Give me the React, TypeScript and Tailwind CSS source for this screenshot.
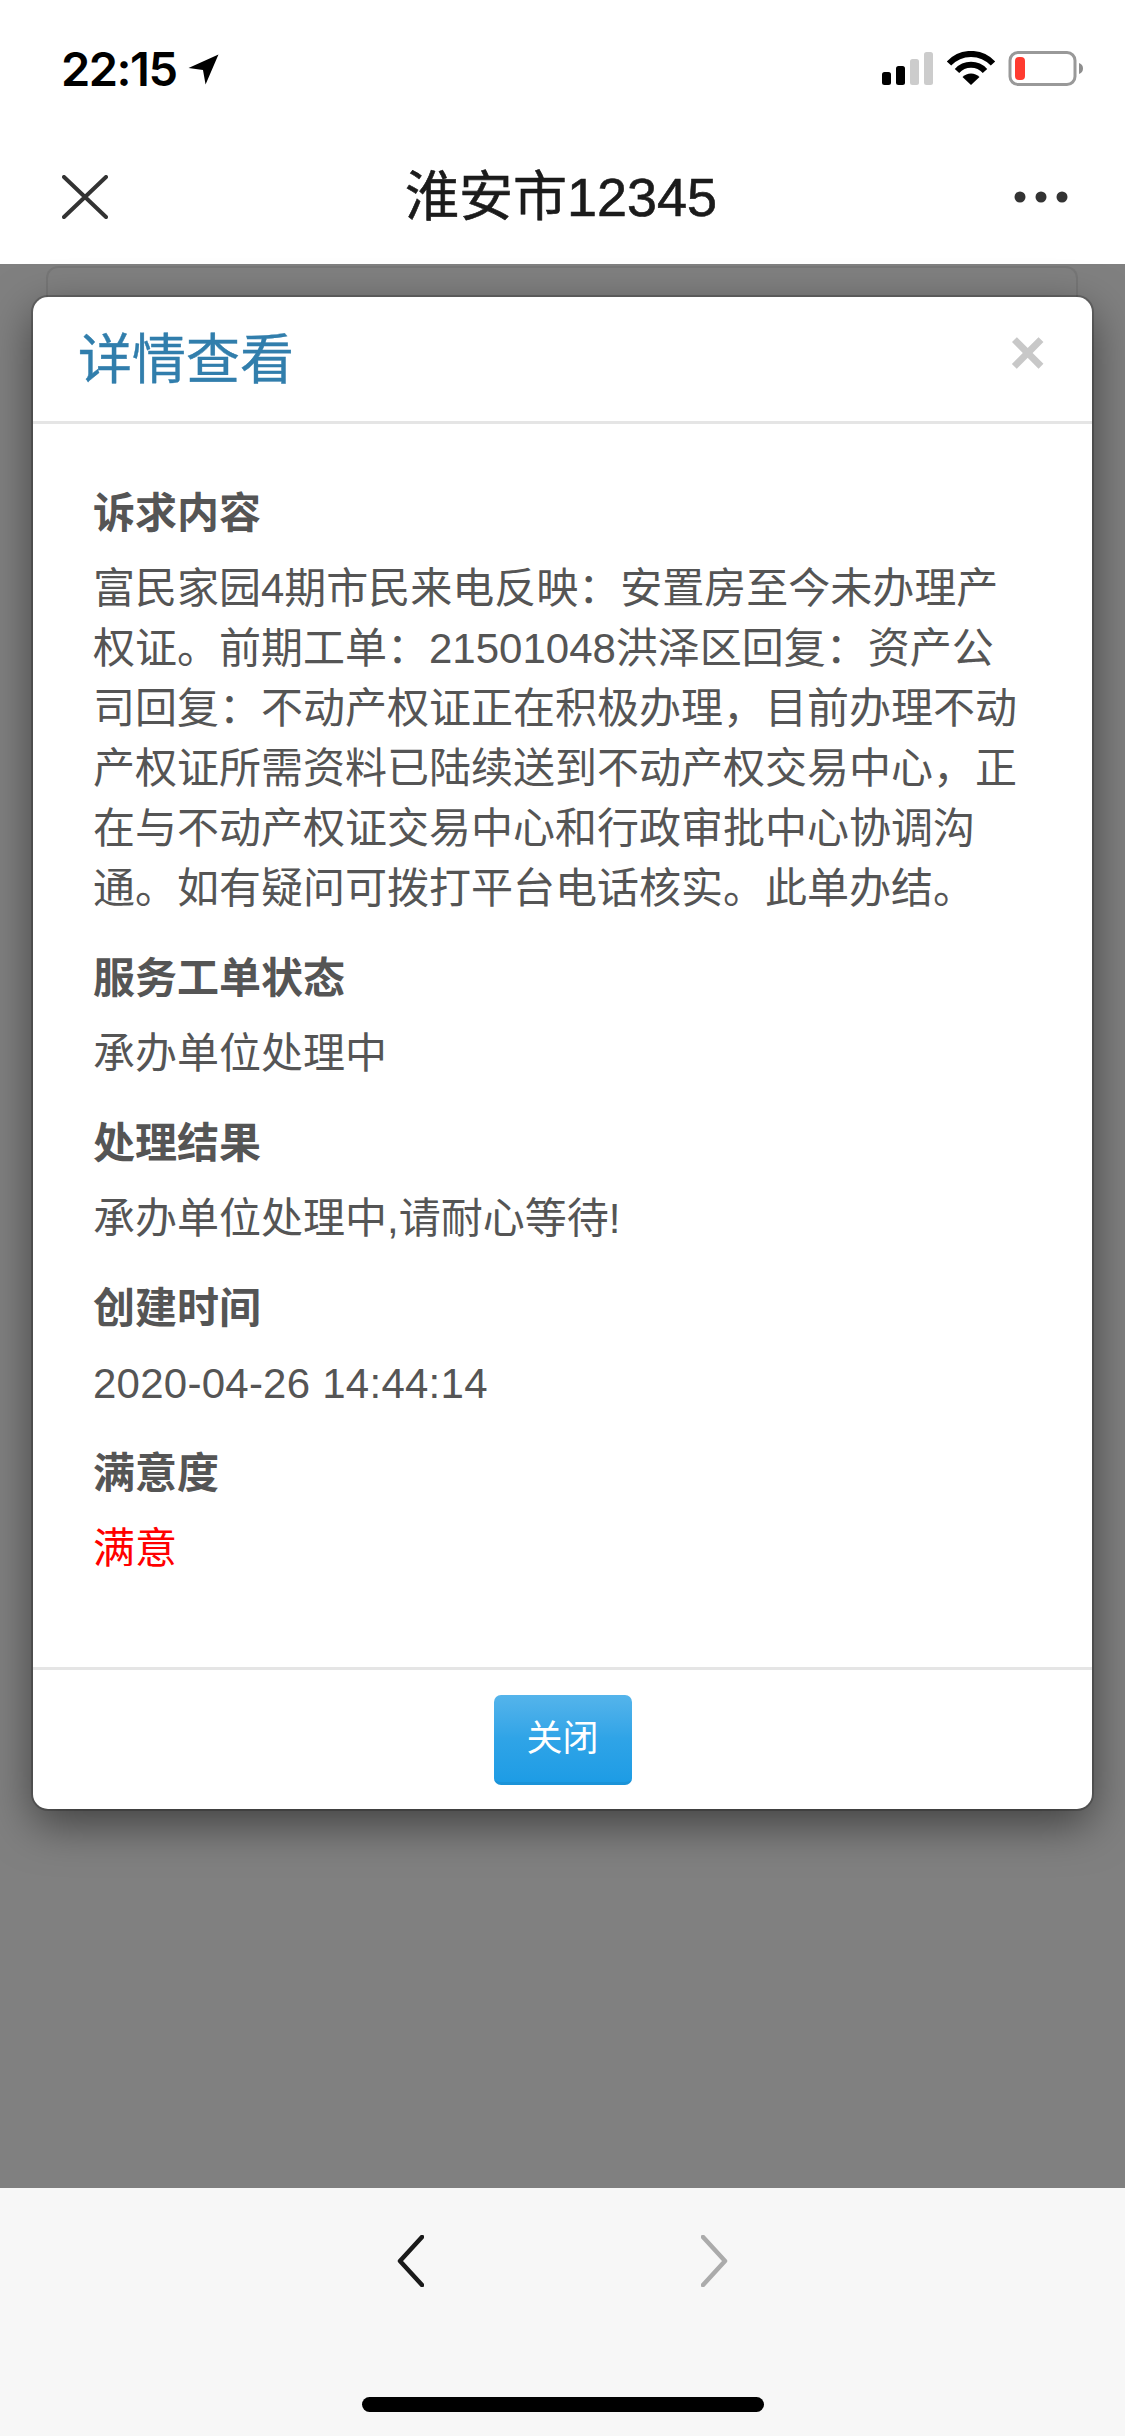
import React from 'react';

const fontStack = "font-['Liberation_Sans','Noto_Sans_CJK_SC',sans-serif]";

const details = [
  {
    label: '诉求内容',
    value:
      '富民家园4期市民来电反映：安置房至今未办理产权证。前期工单：21501048洪泽区回复：资产公司回复：不动产权证正在积极办理，目前办理不动产权证所需资料已陆续送到不动产权交易中心，正在与不动产权证交易中心和行政审批中心协调沟通。如有疑问可拨打平台电话核实。此单办结。',
  },
  { label: '服务工单状态', value: '承办单位处理中' },
  { label: '处理结果', value: '承办单位处理中,请耐心等待!' },
  { label: '创建时间', value: '2020-04-26 14:44:14', cls: 'tracking-[0.25px]' },
  { label: '满意度', value: '满意', cls: 'text-[#f00]' },
];

function StatusIcons() {
  return (
    <svg width="202" height="35" viewBox="0 0 202 35" className="block">
      <rect x="0" y="21" width="9" height="13" rx="2.5" fill="#000" />
      <rect x="14" y="15" width="9" height="19" rx="2.5" fill="#000" />
      <rect x="28" y="8" width="9" height="26" rx="2.5" fill="#ccc" />
      <rect x="42" y="1" width="9" height="33" rx="2.5" fill="#ccc" />
      {/* wifi */}
      <path d="M67 12.5 A30 30 0 0 1 111 12.5" fill="none" stroke="#000" strokeWidth="6" />
      <path d="M75 20 A19 19 0 0 1 103 20" fill="none" stroke="#000" strokeWidth="6" />
      <path d="M80.5 26 L89 34 L97.5 26 A12 12 0 0 0 80.5 26 Z" fill="#000" />
      {/* battery */}
      <rect x="128" y="1.5" width="65" height="32" rx="8" fill="none" stroke="#999" strokeWidth="3" />
      <rect x="133" y="6" width="10" height="23" rx="4" fill="#ff3b30" />
      <path d="M197 12 C200 13 201 15 201 17.5 C201 20 200 22 197 23 Z" fill="#8e8e8e" />
    </svg>
  );
}

export default function App() {
  return (
    <div className={`flex h-[2436px] w-[1125px] flex-col overflow-hidden bg-white ${fontStack}`}>
      {/* status bar */}
      <div className="flex h-[110px] shrink-0 items-start justify-between pl-[61px] pr-[41px] pt-[44px]">
        <div className="flex items-center gap-[11px]">
          <span className="font-['Inter',sans-serif] text-[47px] font-semibold leading-[50px] tracking-[-1.5px] text-black">22:15</span>
          <svg width="31" height="31" viewBox="0 0 30 30" className="block">
            <path d="M29.5 0.5 L0.5 13.5 L14.5 15.5 L17 29.5 Z" fill="#000" />
          </svg>
        </div>
        <div className="pt-[7px]">
          <StatusIcons />
        </div>
      </div>

      {/* nav bar */}
      <div className="flex h-[154px] shrink-0 items-center justify-between pl-[62px] pr-[57px] pt-[20px]">
        <svg width="46" height="44" viewBox="0 0 46 44" className="block">
          <path d="M2 2 L44 42 M44 2 L2 42" stroke="#333" strokeWidth="4" strokeLinecap="round" />
        </svg>
        <div className="text-[54px] font-normal leading-[64px] text-[#1b1b1b] [-webkit-text-stroke:0.6px_#1b1b1b]">淮安市12345</div>
        <svg width="54" height="12" viewBox="0 0 54 12" className="block">
          <circle cx="6" cy="6" r="5.5" fill="#333" />
          <circle cx="27" cy="6" r="5.5" fill="#333" />
          <circle cx="48" cy="6" r="5.5" fill="#333" />
        </svg>
      </div>

      {/* dimmed page with modal */}
      <div className="relative flex-1 bg-[#808080] px-[33px] pt-[33px]">
        <div className="absolute left-[46px] top-[2px] h-[40px] w-[1032px] rounded-t-[12px] border-x-2 border-t-2 border-[#767676]" />
        <div className="relative rounded-[15px] bg-white shadow-[0_0_0_2px_rgba(0,0,0,0.2),0_15px_45px_rgba(0,0,0,0.5)]">
          <div className="flex h-[127px] items-start justify-between border-b-[3px] border-[#e5e5e5] pl-[45px] pr-[46px] pt-[25px]">
            <div className="text-[54px] leading-[76px] text-[#317eac] [-webkit-text-stroke:0.4px_#317eac]">详情查看</div>
            <div className="-mt-[1px] text-[63px] font-bold leading-[63px] text-[#c8c8c8]">×</div>
          </div>

          <div className="flex flex-col gap-[30px] border-b-[3px] border-[#e5e5e5] px-[60px] pb-[88px] pt-[60px] text-[42px] leading-[60px] text-[#555]">
            {details.map((row) => (
              <div key={row.label} className="flex flex-col gap-[15px]">
                <div className="font-bold">{row.label}</div>
                <div className={row.cls}>{row.value}</div>
              </div>
            ))}
          </div>

          <div className="flex justify-center pb-[24px] pt-[25px]">
            <button className="flex h-[90px] w-[138px] items-center justify-center rounded-[7px] border-b-[3px] border-[#1b93d8] bg-gradient-to-b from-[#54b4eb] via-[#2fa4e7] to-[#1d9ce5] text-[36px] text-white">
              关闭
            </button>
          </div>
        </div>
      </div>

      {/* browser toolbar */}
      <div className="flex h-[248px] shrink-0 flex-col items-center bg-[#f7f7f7] pt-[47px]">
        <div className="flex w-[331px] justify-between">
          <svg width="27" height="52" viewBox="0 0 27 52" className="block">
            <path d="M25 2 L3 26 L25 50" fill="none" stroke="#1a1a1a" strokeWidth="4.5" strokeLinecap="round" strokeLinejoin="round" />
          </svg>
          <svg width="27" height="52" viewBox="0 0 27 52" className="block">
            <path d="M2 2 L24 26 L2 50" fill="none" stroke="#ababab" strokeWidth="4.5" strokeLinecap="round" strokeLinejoin="round" />
          </svg>
        </div>
        <div className="mt-[110px] h-[15px] w-[402px] rounded-full bg-black" />
      </div>
    </div>
  );
}
